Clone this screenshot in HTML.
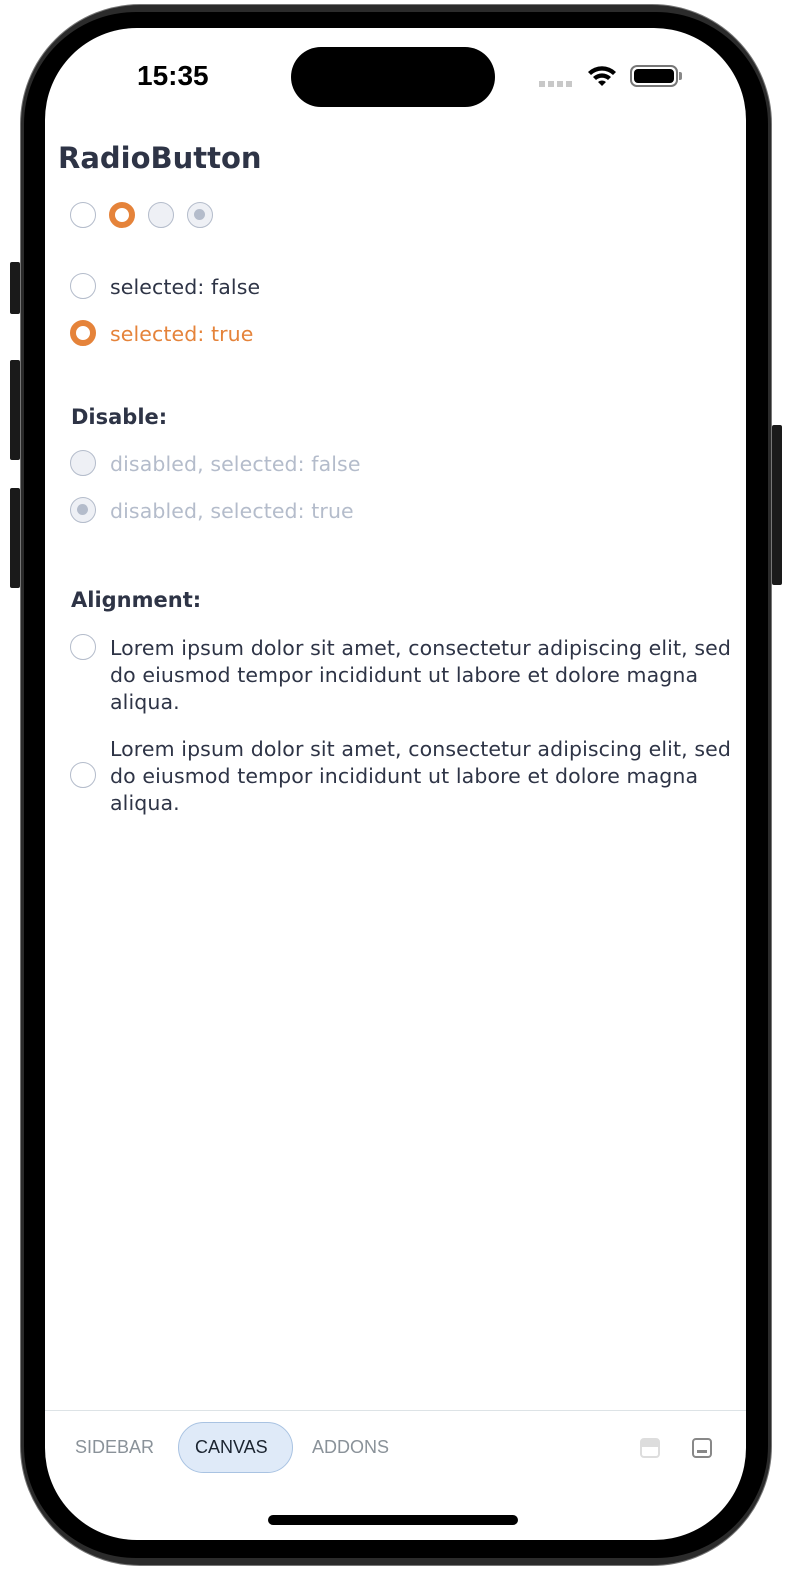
<!DOCTYPE html>
<html><head><meta charset="utf-8"><style>
*{margin:0;padding:0;box-sizing:border-box}
body{width:792px;height:1592px;background:#fff;position:relative;overflow:hidden;font-family:"Liberation Sans",sans-serif;color:#2e3446}
.phone{position:absolute;left:20px;top:4px;width:752px;height:1562px;border-radius:120px;background:#2b2b2b;border:1px solid #777}
.bezel{position:absolute;left:24px;top:12px;width:744px;height:1546px;border-radius:112px;background:#000}
.screen{position:absolute;left:45px;top:28px;width:701px;height:1512px;border-radius:92px;background:#fff;overflow:hidden}
.btn{position:absolute;background:#1a1a1a;border-radius:2px}
.a{position:absolute}
.r{position:absolute;width:26px;height:26px;border-radius:50%;border:1.5px solid #b4bccb;background:#fff}
.r.on{border:6px solid #e5833a}
.r.dis{background:#eef0f5}
.r.dison{background:#eef0f5}
.r.dison::after{content:"";position:absolute;left:6px;top:6px;width:11px;height:11px;border-radius:50%;background:#b4bccb}
.t{position:absolute;left:65px;font-family:"DejaVu Sans",sans-serif;font-size:20.5px;letter-spacing:0.1px;white-space:nowrap;line-height:27px}
.org{color:#e5833a}
h2{position:absolute;left:26px;font-family:"DejaVu Sans",sans-serif;font-size:21px;font-weight:bold;color:#2e3446}
</style></head><body>
<div class="btn" style="left:10px;top:262px;width:10px;height:52px"></div>
<div class="btn" style="left:10px;top:360px;width:10px;height:100px"></div>
<div class="btn" style="left:10px;top:488px;width:10px;height:100px"></div>
<div class="btn" style="left:772px;top:425px;width:10px;height:160px"></div>
<div class="phone"></div>
<div class="bezel"></div>
<div class="screen">
 <div class="a" style="left:92px;top:32px;font-size:28px;font-weight:bold;color:#000">15:35</div>
 <div class="a" style="left:246px;top:19px;width:204px;height:60px;border-radius:30px;background:#000"></div>
 <div class="a" style="left:494px;top:53px;width:34px;height:6px;background:repeating-linear-gradient(90deg,#c8c8c8 0 6px,transparent 6px 9px)"></div>
 <svg class="a" style="left:541px;top:36px" width="32" height="24" viewBox="0 0 32 24"><path d="M2 8a20 20 0 0 1 28 0l-3 3a16 16 0 0 0-22 0z M7 13a13 13 0 0 1 18 0l-3 3a9 9 0 0 0-12 0z M12 18a6 6 0 0 1 8 0l-4 4z" fill="#000"/></svg>
 <div class="a" style="left:585px;top:37px;width:48px;height:22px;border:2px solid #777;border-radius:7px;padding:2px"><div style="width:100%;height:100%;background:#000;border-radius:4px"></div></div>
 <div class="a" style="left:634px;top:44px;width:3px;height:8px;background:#888;border-radius:0 2px 2px 0"></div>

 <div class="a" style="left:13px;top:113px;font-family:'DejaVu Sans',sans-serif;font-size:29px;font-weight:bold;color:#2e3446">RadioButton</div>
 <div class="r" style="left:25px;top:174px"></div>
 <div class="r on" style="left:64px;top:174px"></div>
 <div class="r dis" style="left:103px;top:174px"></div>
 <div class="r dison" style="left:142px;top:174px"></div>

 <div class="r" style="left:25px;top:245px"></div><div class="t" style="top:246px">selected: false</div>
 <div class="r on" style="left:25px;top:292px"></div><div class="t org" style="top:293px">selected: true</div>

 <h2 style="top:377px">Disable:</h2>
 <div class="r dis" style="left:25px;top:422px"></div><div class="t" style="top:423px;color:#b4bccb">disabled, selected: false</div>
 <div class="r dison" style="left:25px;top:469px"></div><div class="t" style="top:470px;color:#b4bccb">disabled, selected: true</div>

 <h2 style="top:560px">Alignment:</h2>
 <div class="r" style="left:25px;top:606px"></div>
 <div class="t" style="top:607px">Lorem ipsum dolor sit amet, consectetur adipiscing elit, sed<br>do eiusmod tempor incididunt ut labore et dolore magna<br>aliqua.</div>
 <div class="r" style="left:25px;top:734px"></div>
 <div class="t" style="top:708px">Lorem ipsum dolor sit amet, consectetur adipiscing elit, sed<br>do eiusmod tempor incididunt ut labore et dolore magna<br>aliqua.</div>

 <div class="a" style="left:0;top:1382px;width:701px;height:1px;background:#dde3e6"></div>
 <div class="a" style="left:30px;top:1409px;font-size:18px;color:#8a9299">SIDEBAR</div>
 <div class="a" style="left:133px;top:1394px;width:115px;height:51px;border-radius:26px;background:#dfeaf8;border:1px solid #a9c3e2"></div>
 <div class="a" style="left:150px;top:1409px;font-size:18px;color:#1b2430">CANVAS</div>
 <div class="a" style="left:267px;top:1409px;font-size:18px;color:#8a9299">ADDONS</div>
 <div class="a" style="left:595px;top:1410px;width:20px;height:20px;border:2px solid #ddd;border-radius:4px;background:linear-gradient(#ddd 0 45%,#fff 45%)"></div>
 <div class="a" style="left:647px;top:1410px;width:20px;height:20px;border:2px solid #888;border-radius:4px"><div style="position:absolute;left:3px;bottom:3px;width:10px;height:3px;background:#888"></div></div>
 <div class="a" style="left:223px;top:1487px;width:250px;height:10px;border-radius:5px;background:#000"></div>
</div>
</body></html>
